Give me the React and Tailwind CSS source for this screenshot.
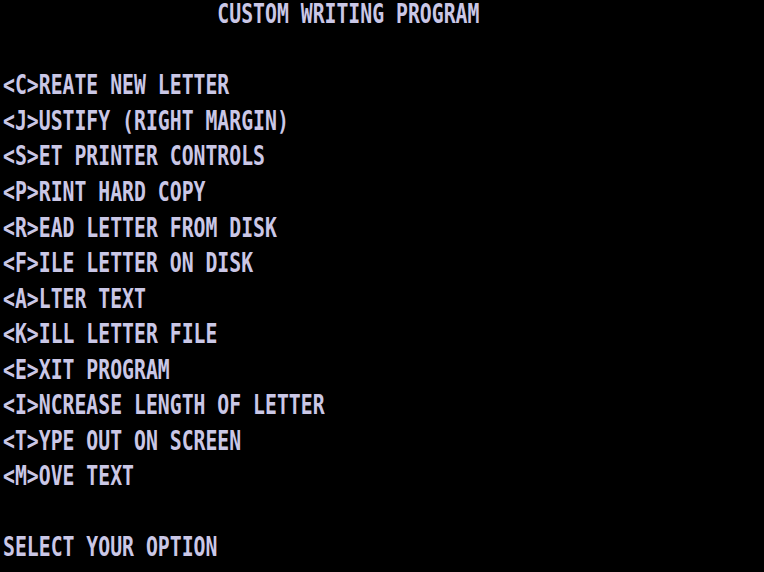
const rows = [
  "                  CUSTOM WRITING PROGRAM",
  "",
  "<C>REATE NEW LETTER",
  "<J>USTIFY (RIGHT MARGIN)",
  "<S>ET PRINTER CONTROLS",
  "<P>RINT HARD COPY",
  "<R>EAD LETTER FROM DISK",
  "<F>ILE LETTER ON DISK",
  "<A>LTER TEXT",
  "<K>ILL LETTER FILE",
  "<E>XIT PROGRAM",
  "<I>NCREASE LENGTH OF LETTER",
  "<T>YPE OUT ON SCREEN",
  "<M>OVE TEXT",
  "",
  "SELECT YOUR OPTION",
];

export default function App() {
  return (
    <div className="w-[764px] h-[572px] bg-black overflow-hidden pl-[3px] pt-[2px] font-['DejaVu_Sans_Mono',monospace] text-[#cac7e6]">
      {rows.map((line, i) => (
        <div key={i} className="h-[35.54px] pb-[9px] flex items-center">
          <span className="inline-block whitespace-pre text-[19.8px] leading-none font-bold scale-y-[1.38]">
            {line}
          </span>
        </div>
      ))}
    </div>
  );
}
